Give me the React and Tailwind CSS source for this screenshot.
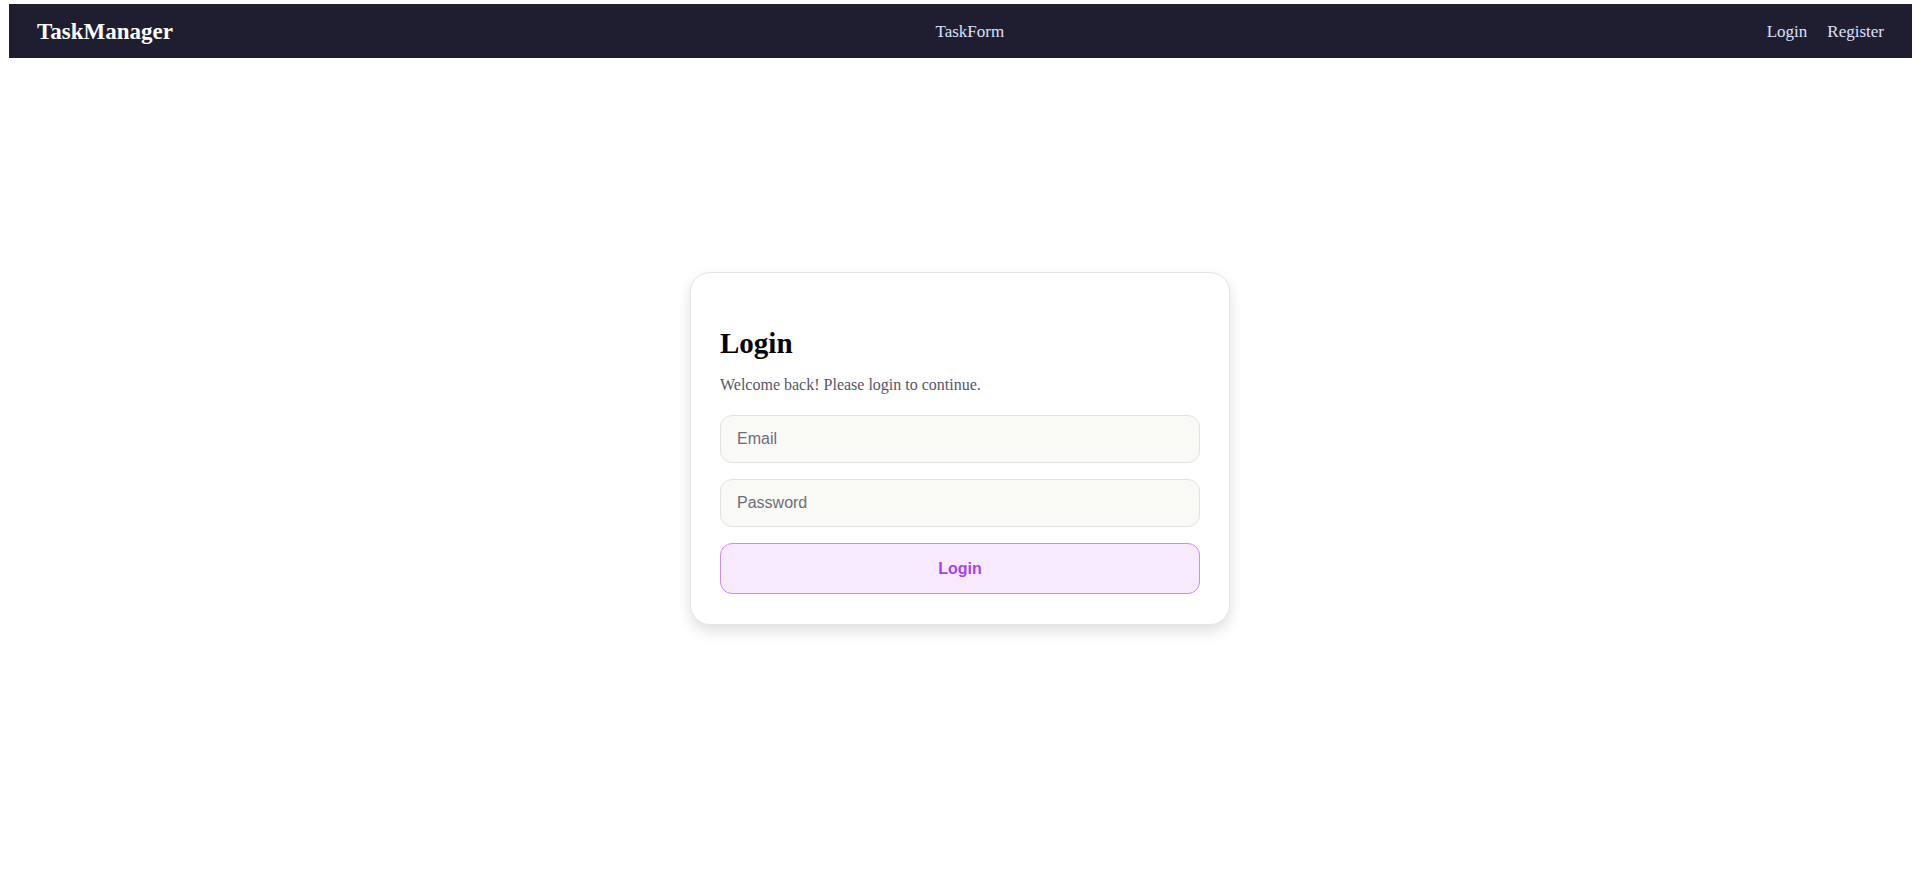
import React from "react";

const serif = { fontFamily: '"Liberation Serif", "Times New Roman", serif' };

const NavBar = () => {
  return (
    <nav
      className="ml-[9px] mr-[8px] mt-[4px] flex h-[54px] items-center justify-between bg-[#1f1e30] px-[28px]"
      style={serif}
    >
      <a href="#" className="text-[23px] font-bold leading-none text-white">
        TaskManager
      </a>
      <a href="#" className="text-[17px] leading-none text-[#dbe2ff]">
        TaskForm
      </a>
      <div className="flex items-center gap-[20px] text-[17px] leading-none text-[#dbe2ff]">
        <a href="#">Login</a>
        <a href="#">Register</a>
      </div>
    </nav>
  );
};

const LoginCard = () => {
  return (
    <div className="w-[540px] rounded-[20px] border border-[#e6e6e6] bg-white px-[29px] pb-[30px] pt-[29px] shadow-[0_6px_14px_rgba(0,0,0,0.13)]">
      <h2
        className="mt-[25px] mb-[17px] text-[29px] font-bold leading-[32px] text-black"
        style={serif}
      >
        Login
      </h2>
      <p className="mb-[21px] text-[16px] leading-[18px] text-[#55556a]" style={serif}>
        Welcome back! Please login to continue.
      </p>
      <form className="flex flex-col gap-[16px] font-['Liberation_Sans',Arial,sans-serif]">
        <input
          type="email"
          placeholder="Email"
          className="h-[48px] w-full rounded-[12px] border border-[#e2e2e2] bg-[#f9f9f6] px-4 text-[16px] text-[#333] outline-none placeholder:text-[#6e6e78]"
        />
        <input
          type="password"
          placeholder="Password"
          className="h-[48px] w-full rounded-[12px] border border-[#e2e2e2] bg-[#f9f9f6] px-4 text-[16px] text-[#333] outline-none placeholder:text-[#6e6e78]"
        />
        <button
          type="button"
          className="h-[51px] w-full rounded-[12px] border border-[#c98afc] bg-[#f7e9fe] text-[16px] font-bold text-[#a642f0]"
        >
          Login
        </button>
      </form>
    </div>
  );
};

const App = () => {
  return (
    <div className="min-h-screen bg-white">
      <NavBar />
      <main className="flex justify-center pt-[214px]">
        <LoginCard />
      </main>
    </div>
  );
};

export default App;
